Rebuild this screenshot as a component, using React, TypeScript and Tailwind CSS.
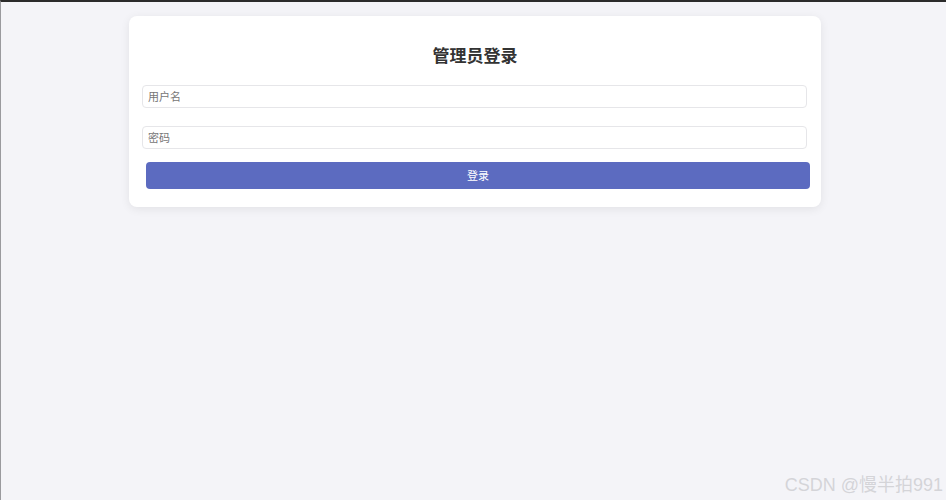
export default function App() {
  return (
    <div
      className="relative h-[500px] w-[946px] overflow-hidden border-t-2 border-l border-t-[#2b2b2b] border-l-[#9a9a9e] bg-[#f4f4f8]"
      style={{ fontFamily: '"Noto Sans", "Noto Sans CJK SC", sans-serif' }}
    >
      {/* login card */}
      <div className="ml-[128px] mt-[14px] w-[692px] rounded-[8px] bg-white px-[13px] pt-[27px] pb-[18px] shadow-[0_2px_10px_rgba(0,0,0,0.08)]">
        <h2 className="text-center text-[17px] leading-[26px] font-bold text-[#333]">
          管理员登录
        </h2>
        <input
          type="text"
          placeholder="用户名"
          className="mt-[16px] block h-[23px] w-[665px] rounded-[4px] border border-[#e6e6e9] px-[5px] text-[11px] text-[#333] outline-none placeholder:text-[#767676]"
        />
        <input
          type="password"
          placeholder="密码"
          className="mt-[18px] block h-[23px] w-[665px] rounded-[4px] border border-[#e6e6e9] px-[5px] text-[11px] text-[#333] outline-none placeholder:text-[#767676]"
        />
        <button
          type="button"
          className="mt-[13px] ml-[4px] block h-[27px] w-[664px] rounded-[4px] bg-[#5c6bc0] pt-[2px] text-[11px] text-white"
        >
          登录
        </button>
      </div>

      <span
        className="absolute right-[3px] bottom-[6px] text-[18px] leading-none text-[#d4d4d8]"
        style={{ fontFamily: '"Liberation Sans", "Noto Sans CJK SC", sans-serif' }}
      >
        CSDN @慢半拍991
      </span>
    </div>
  );
}
